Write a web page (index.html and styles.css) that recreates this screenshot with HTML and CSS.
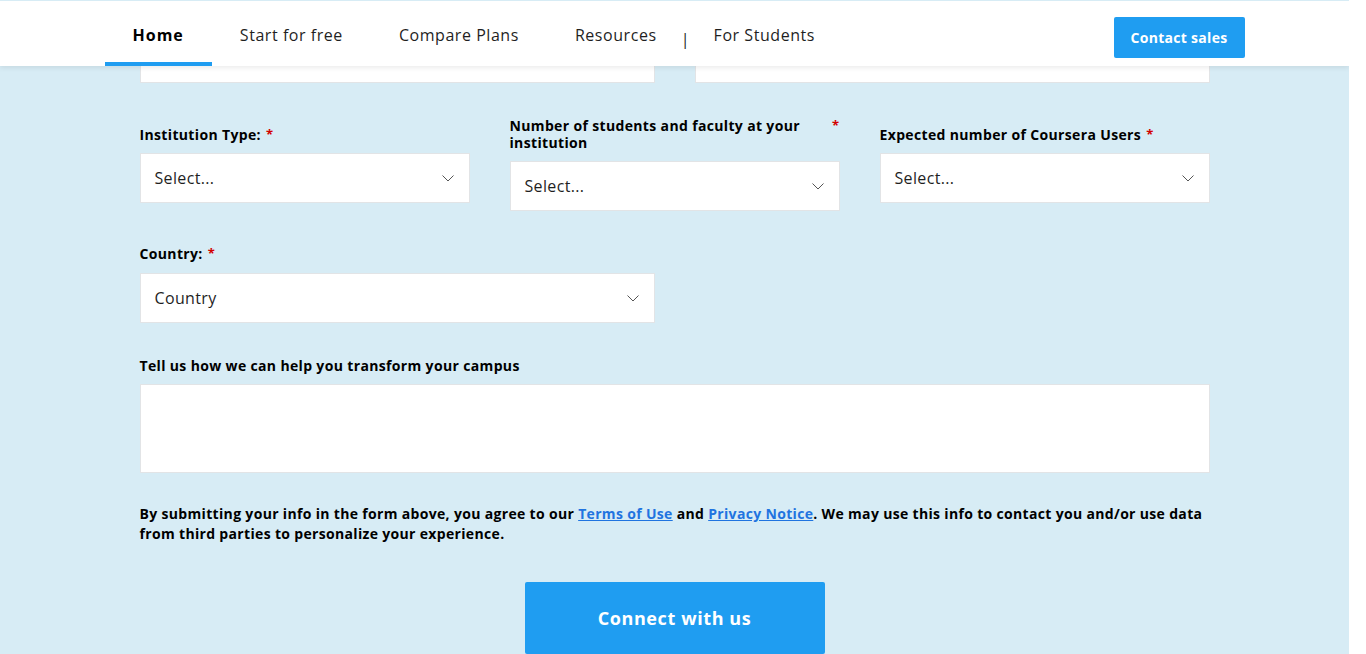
FILE: index.html
```html
<!DOCTYPE html>
<html lang="en">
<head>
<meta charset="utf-8">
<title>Coursera for Campus – Contact</title>
<link rel="stylesheet" href="styles.css">
</head>
<body>
<div class="page">
  <header class="topbar">
    <div class="topbar__inner">
      <nav class="nav">
        <a class="nav__link nav__link--active" href="#">Home</a>
        <a class="nav__link" href="#">Start for free</a>
        <a class="nav__link" href="#">Compare Plans</a>
        <a class="nav__link" href="#">Resources</a>
        <span class="nav__sep">|</span>
        <a class="nav__link" href="#">For Students</a>
      </nav>
      <a class="btn btn--sales" href="#">Contact sales</a>
    </div>
  </header>

  <main class="form-wrap">
    <form class="form">
      <div class="row row--two">
        <div class="field"><input class="input" type="text"></div>
        <div class="field"><input class="input" type="text"></div>
      </div>

      <div class="row row--three">
        <div class="field">
          <div class="label"><span class="label__text">Institution Type:</span><span class="req">*</span></div>
          <div class="select"><span>Select...</span><svg class="chev" width="12" height="7" viewBox="0 0 12 7"><polyline points="0.5,0.5 6,6 11.5,0.5" fill="none" stroke="#555" stroke-width="1"/></svg></div>
        </div>
        <div class="field">
          <div class="label label--split"><span class="label__text">Number of students and faculty at your institution</span><span class="req">*</span></div>
          <div class="select"><span>Select...</span><svg class="chev" width="12" height="7" viewBox="0 0 12 7"><polyline points="0.5,0.5 6,6 11.5,0.5" fill="none" stroke="#555" stroke-width="1"/></svg></div>
        </div>
        <div class="field">
          <div class="label"><span class="label__text">Expected number of Coursera Users</span><span class="req">*</span></div>
          <div class="select"><span>Select...</span><svg class="chev" width="12" height="7" viewBox="0 0 12 7"><polyline points="0.5,0.5 6,6 11.5,0.5" fill="none" stroke="#555" stroke-width="1"/></svg></div>
        </div>
      </div>

      <div class="row row--two">
        <div class="field">
          <div class="label"><span class="label__text">Country:</span><span class="req">*</span></div>
          <div class="select"><span>Country</span><svg class="chev" width="12" height="7" viewBox="0 0 12 7"><polyline points="0.5,0.5 6,6 11.5,0.5" fill="none" stroke="#555" stroke-width="1"/></svg></div>
        </div>
      </div>

      <div class="row">
        <div class="field">
          <div class="label label--area"><span class="label__text">Tell us how we can help you transform your campus</span></div>
          <textarea class="textarea"></textarea>
        </div>
      </div>

      <p class="consent"><span>By submitting your info in the form above, you agree to our </span><a href="#">Terms of Use</a><span> and </span><a href="#">Privacy Notice</a><span>. We may use this info to contact you and/or use data</span> <span>from third parties to personalize your experience.</span></p>

      <div class="submit">
        <button class="btn btn--submit" type="button">Connect with us</button>
      </div>
    </form>
  </main>
</div>
</body>
</html>
```

FILE: styles.css
```css
* { box-sizing: border-box; }

html, body {
  margin: 0;
  padding: 0;
  height: 100%;
  overflow: hidden;
  background: #ffffff;
}

body {
  font-family: "Open Sans", "Liberation Sans", sans-serif;
  color: #000;
}

.page {
  margin-right: 17px;
  height: 100%;
  background: #d7ecf5;
  position: relative;
  overflow: hidden;
}

.topbar {
  position: absolute;
  top: 0;
  left: 0;
  right: 0;
  z-index: 10;
  height: 66px;
  background: #fff;
  border-top: 1px solid #d7ecf5;
  box-shadow: 0 2px 5px rgba(0, 0, 0, 0.08);
}

.topbar__inner {
  max-width: 1140px;
  height: 100%;
  margin: 0 auto;
  display: flex;
  align-items: stretch;
  justify-content: space-between;
}

.nav {
  display: flex;
  align-items: stretch;
}

.nav__link {
  display: flex;
  align-items: center;
  padding: 6px 28px 0;
  border-bottom: 4px solid transparent;
  font-size: 16px;
  letter-spacing: 0.55px;
  color: #1f1f1f;
  text-decoration: none;
}

.nav__link--active {
  font-weight: 700;
  letter-spacing: 1px;
  color: #000;
  border-bottom-color: #1f9df1;
}

.nav__sep {
  display: flex;
  align-items: center;
  justify-content: center;
  width: 1px;
  padding-top: 10px;
  font-size: 16px;
  color: #1f1f1f;
}

.btn {
  font-family: inherit;
  font-weight: 700;
  color: #fff;
  background: #1f9df1;
  border: 0;
  border-radius: 2px;
  text-decoration: none;
}

.btn--sales {
  align-self: flex-start;
  margin-top: 16px;
  width: 131px;
  height: 41px;
  display: flex;
  align-items: center;
  justify-content: center;
  font-size: 14px;
  letter-spacing: 0.3px;
}

.form-wrap {
  max-width: 1070px;
  margin: 0 auto;
  padding-top: 33px;
}

.form {
  display: flex;
  flex-direction: column;
  gap: 34px;
}

.row {
  display: grid;
  grid-template-columns: 1fr;
  column-gap: 40px;
  align-items: center;
}

.row--two { grid-template-columns: 1fr 1fr; }
.row--three { grid-template-columns: 1fr 1fr 1fr; }

.field {
  display: flex;
  flex-direction: column;
}

.label {
  display: flex;
  align-items: flex-start;
  gap: 5px;
  margin-bottom: 10px;
  font-size: 14px;
  line-height: 17px;
  font-weight: 700;
  letter-spacing: 0.35px;
}

.label--split { justify-content: space-between; }
.label--split .label__text { max-width: 300px; }

.req {
  color: #d30000;
  font-size: 13px;
}

.input,
.select {
  height: 50px;
  background: #fff;
  border: 1px solid #e2e4e6;
  border-radius: 0;
}

.input { width: 100%; }

.select {
  display: flex;
  align-items: center;
  justify-content: space-between;
  padding: 0 15px 0 14px;
  font-size: 16px;
  letter-spacing: 0.35px;
  color: #1f1f1f;
}

.row--two .select { margin-top: 1px; }

.chev { display: block; margin-top: 1px; }

.textarea {
  display: block;
  width: 100%;
  height: 89px;
  background: #fff;
  border: 1px solid #e2e4e6;
  resize: none;
  font-family: inherit;
}

.consent {
  margin: -3px 0 0;
  font-size: 14px;
  line-height: 20px;
  font-weight: 700;
  letter-spacing: 0.33px;
}

.consent a {
  color: #1f74e0;
  text-decoration: underline;
}

.submit {
  display: flex;
  justify-content: center;
  margin-top: 4px;
}

.btn--submit {
  width: 300px;
  height: 72px;
  font-size: 18px;
  letter-spacing: 0.6px;
}
```
